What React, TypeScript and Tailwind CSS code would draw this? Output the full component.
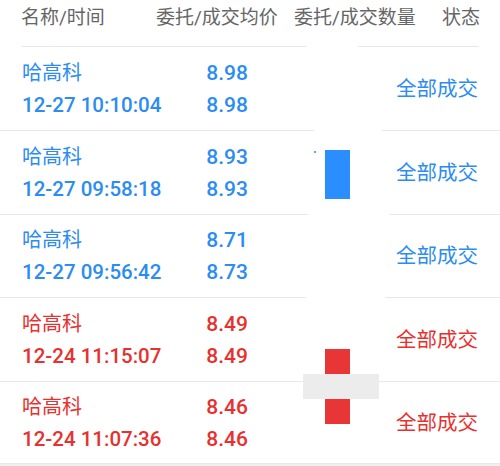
import React from "react";

type Row = { time: string; p1: string; p2: string; red: boolean; h: string };

const rows: Row[] = [
  { time: "12-27 10:10:04", p1: "8.98", p2: "8.98", red: false, h: "h-[84px]" },
  { time: "12-27 09:58:18", p1: "8.93", p2: "8.93", red: false, h: "h-[84px]" },
  { time: "12-27 09:56:42", p1: "8.71", p2: "8.73", red: false, h: "h-[83px]" },
  { time: "12-24 11:15:07", p1: "8.49", p2: "8.49", red: true, h: "h-[84px]" },
  { time: "12-24 11:07:36", p1: "8.46", p2: "8.46", red: true, h: "h-[82px]" },
];

export default function App() {
  return (
    <div
      className="relative w-[500px] h-[466px] bg-white overflow-hidden"
      style={{ fontFamily: 'Roboto, "Noto Sans CJK SC", sans-serif' }}
    >
      {/* header */}
      <div className="flex h-[46px] text-[19px] leading-[36px] text-[#666666]">
        <div className="w-[156px] pl-[21px]">名称/时间</div>
        <div className="w-[138px]">委托/成交均价</div>
        <div className="w-[148px]">委托/成交数量</div>
        <div>状态</div>
      </div>
      <div className="mx-[21px] h-px bg-[#e9e9e9]" />

      {rows.map((r, i) => {
        const color = r.red ? "text-[#e8302e]" : "text-[#2b8cf2]";
        return (
          <div
            key={i}
            className={`flex items-center ${r.h} border-b border-[#e9e9e9] ${color}`}
          >
            <div className="flex w-[200px] flex-col pl-[22px]">
              <div className="h-[32px] text-[20px] leading-[32px]">哈高科</div>
              <div className="h-[32px] whitespace-nowrap text-[20.5px] font-medium leading-[32px]">
                {r.time}
              </div>
            </div>
            <div className="flex w-[48px] flex-col items-end">
              <div className="h-[32px] text-[21px] font-medium leading-[32px]">{r.p1}</div>
              <div className="h-[32px] text-[21px] font-medium leading-[32px]">{r.p2}</div>
            </div>
            <div className="flex-1" />
            <div className="pr-[22px] text-[20.5px] leading-[32px]">全部成交</div>
          </div>
        );
      })}
      <div className="h-[2px] bg-[#efefef]" />

      {/* masking patches over the quantity column */}
      <div className="absolute left-[307px] top-[45px] h-[3px] w-[51px] bg-white" />
      <div className="absolute left-[314px] top-[129px] h-[3px] w-[68px] bg-white" />
      <div className="absolute left-[308px] top-[213px] h-[3px] w-[81px] bg-white" />
      <div className="absolute left-[306px] top-[296px] h-[3px] w-[79px] bg-white" />

      {/* blue bar */}
      <div className="absolute left-[314px] top-[151px] h-[2px] w-[2px] bg-[#5aa6ff]" />
      <div className="absolute left-[325px] top-[150px] h-[49px] w-[25px] bg-[#2a8eff]" />

      {/* red bars and gray block */}
      <div className="absolute left-[325px] top-[349px] h-[25px] w-[25px] bg-[#e83535]" />
      <div className="absolute left-[303px] top-[374px] h-[25px] w-[76px] bg-[#ececec]" />
      <div className="absolute left-[325px] top-[399px] h-[25px] w-[25px] bg-[#e83535]" />
    </div>
  );
}
